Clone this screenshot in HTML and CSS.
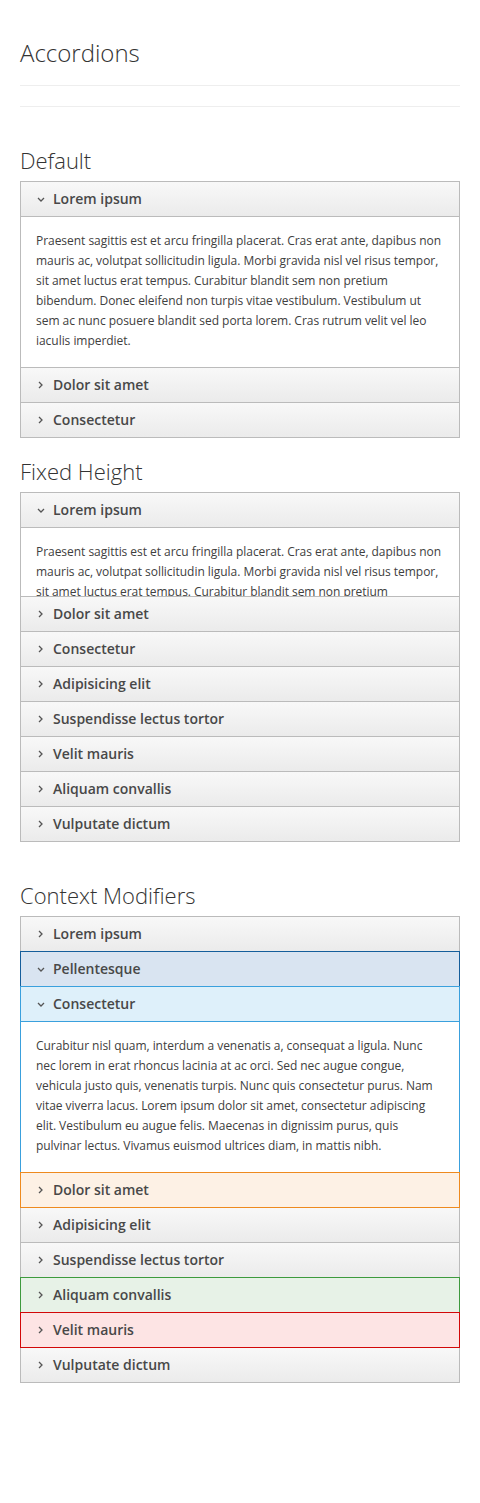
FILE: index.html
```html
<!DOCTYPE html>
<html lang="en">
<head>
<meta charset="utf-8">
<title>Accordions</title>
<link rel="stylesheet" href="styles.css">
</head>
<body>
<main class="page">
  <h1 class="page-title">Accordions</h1>
  <hr class="rule">
  <hr class="rule rule-second">

  <section class="section">
    <h2 class="section-title">Default</h2>
    <div class="accordion">
      <div class="acc-item is-open">
        <div class="acc-head"><svg class="chev chev-down" width="8" height="5" viewBox="0 0 8 5"><path d="M1 1 L4 4 L7 1" /></svg><span>Lorem ipsum</span></div>
        <div class="acc-body">Praesent sagittis est et arcu fringilla placerat. Cras erat ante, dapibus non mauris ac, volutpat sollicitudin ligula. Morbi gravida nisl vel risus tempor, sit amet luctus erat tempus. Curabitur blandit sem non pretium bibendum. Donec eleifend non turpis vitae vestibulum. Vestibulum ut sem ac nunc posuere blandit sed porta lorem. Cras rutrum velit vel leo iaculis imperdiet.</div>
      </div>
      <div class="acc-item">
        <div class="acc-head"><svg class="chev chev-right" width="5" height="8" viewBox="0 0 5 8"><path d="M1 1 L4 4 L1 7" /></svg><span>Dolor sit amet</span></div>
      </div>
      <div class="acc-item">
        <div class="acc-head"><svg class="chev chev-right" width="5" height="8" viewBox="0 0 5 8"><path d="M1 1 L4 4 L1 7" /></svg><span>Consectetur</span></div>
      </div>
    </div>
  </section>

  <section class="section">
    <h2 class="section-title">Fixed Height</h2>
    <div class="accordion accordion-fixed">
      <div class="acc-item is-open">
        <div class="acc-head"><svg class="chev chev-down" width="8" height="5" viewBox="0 0 8 5"><path d="M1 1 L4 4 L7 1" /></svg><span>Lorem ipsum</span></div>
        <div class="acc-body">Praesent sagittis est et arcu fringilla placerat. Cras erat ante, dapibus non mauris ac, volutpat sollicitudin ligula. Morbi gravida nisl vel risus tempor, sit amet luctus erat tempus. Curabitur blandit sem non pretium bibendum. Donec eleifend non turpis vitae vestibulum. Vestibulum ut sem ac nunc posuere blandit sed porta lorem. Cras rutrum velit vel leo iaculis imperdiet.</div>
      </div>
      <div class="acc-item"><div class="acc-head"><svg class="chev chev-right" width="5" height="8" viewBox="0 0 5 8"><path d="M1 1 L4 4 L1 7" /></svg><span>Dolor sit amet</span></div></div>
      <div class="acc-item"><div class="acc-head"><svg class="chev chev-right" width="5" height="8" viewBox="0 0 5 8"><path d="M1 1 L4 4 L1 7" /></svg><span>Consectetur</span></div></div>
      <div class="acc-item"><div class="acc-head"><svg class="chev chev-right" width="5" height="8" viewBox="0 0 5 8"><path d="M1 1 L4 4 L1 7" /></svg><span>Adipisicing elit</span></div></div>
      <div class="acc-item"><div class="acc-head"><svg class="chev chev-right" width="5" height="8" viewBox="0 0 5 8"><path d="M1 1 L4 4 L1 7" /></svg><span>Suspendisse lectus tortor</span></div></div>
      <div class="acc-item"><div class="acc-head"><svg class="chev chev-right" width="5" height="8" viewBox="0 0 5 8"><path d="M1 1 L4 4 L1 7" /></svg><span>Velit mauris</span></div></div>
      <div class="acc-item"><div class="acc-head"><svg class="chev chev-right" width="5" height="8" viewBox="0 0 5 8"><path d="M1 1 L4 4 L1 7" /></svg><span>Aliquam convallis</span></div></div>
      <div class="acc-item"><div class="acc-head"><svg class="chev chev-right" width="5" height="8" viewBox="0 0 5 8"><path d="M1 1 L4 4 L1 7" /></svg><span>Vulputate dictum</span></div></div>
    </div>
  </section>

  <section class="section section-spaced">
    <h2 class="section-title">Context Modifiers</h2>
    <div class="accordion">
      <div class="acc-item"><div class="acc-head"><svg class="chev chev-right" width="5" height="8" viewBox="0 0 5 8"><path d="M1 1 L4 4 L1 7" /></svg><span>Lorem ipsum</span></div></div>
      <div class="acc-item ctx-primary"><div class="acc-head"><svg class="chev chev-down" width="8" height="5" viewBox="0 0 8 5"><path d="M1 1 L4 4 L7 1" /></svg><span>Pellentesque</span></div></div>
      <div class="acc-item ctx-info is-open">
        <div class="acc-head"><svg class="chev chev-down" width="8" height="5" viewBox="0 0 8 5"><path d="M1 1 L4 4 L7 1" /></svg><span>Consectetur</span></div>
        <div class="acc-body">Curabitur nisl quam, interdum a venenatis a, consequat a ligula. Nunc nec lorem in erat rhoncus lacinia at ac orci. Sed nec augue congue, vehicula justo quis, venenatis turpis. Nunc quis consectetur purus. Nam vitae viverra lacus. Lorem ipsum dolor sit amet, consectetur adipiscing elit. Vestibulum eu augue felis. Maecenas in dignissim purus, quis pulvinar lectus. Vivamus euismod ultrices diam, in mattis nibh.</div>
      </div>
      <div class="acc-item ctx-warning"><div class="acc-head"><svg class="chev chev-right" width="5" height="8" viewBox="0 0 5 8"><path d="M1 1 L4 4 L1 7" /></svg><span>Dolor sit amet</span></div></div>
      <div class="acc-item"><div class="acc-head"><svg class="chev chev-right" width="5" height="8" viewBox="0 0 5 8"><path d="M1 1 L4 4 L1 7" /></svg><span>Adipisicing elit</span></div></div>
      <div class="acc-item"><div class="acc-head"><svg class="chev chev-right" width="5" height="8" viewBox="0 0 5 8"><path d="M1 1 L4 4 L1 7" /></svg><span>Suspendisse lectus tortor</span></div></div>
      <div class="acc-item ctx-success"><div class="acc-head"><svg class="chev chev-right" width="5" height="8" viewBox="0 0 5 8"><path d="M1 1 L4 4 L1 7" /></svg><span>Aliquam convallis</span></div></div>
      <div class="acc-item ctx-danger"><div class="acc-head"><svg class="chev chev-right" width="5" height="8" viewBox="0 0 5 8"><path d="M1 1 L4 4 L1 7" /></svg><span>Velit mauris</span></div></div>
      <div class="acc-item"><div class="acc-head"><svg class="chev chev-right" width="5" height="8" viewBox="0 0 5 8"><path d="M1 1 L4 4 L1 7" /></svg><span>Vulputate dictum</span></div></div>
    </div>
  </section>
</main>
</body>
</html>
```

FILE: styles.css
```css
html, body {
  margin: 0;
  padding: 0;
  background: #ffffff;
}

body {
  font-family: "Open Sans", "Liberation Sans", sans-serif;
  color: #333333;
}

.page {
  padding: 37px 20px 40px;
}

.page-title {
  margin: 0;
  font-size: 24px;
  font-weight: 300;
  line-height: 32px;
  color: #333333;
}

.rule {
  border: 0;
  border-top: 1px solid #eeeeee;
  margin: 16px 0 0;
  height: 0;
}

.rule-second {
  margin-top: 20px;
}

.section {
  margin-top: 38px;
}

.section + .section {
  margin-top: 18px;
}

.section.section-spaced {
  margin-top: 38px;
}

.section-title {
  margin: 0 0 6px;
  font-size: 22px;
  font-weight: 300;
  line-height: 30px;
  color: #333333;
}

.accordion {
  display: flex;
  flex-direction: column;
  padding-top: 1px;
}

.acc-item {
  position: relative;
  margin-top: -1px;
  border: 1px solid #bbbbbb;
  background: #ffffff;
}

.acc-head {
  display: flex;
  align-items: center;
  height: 34px;
  padding: 0 15px 0 16px;
  background: linear-gradient(to bottom, #f8f8f8, #ebebeb);
  font-size: 14px;
  font-weight: 600;
  color: #484848;
}

.acc-item.is-open > .acc-head {
  border-bottom: 1px solid #bbbbbb;
}

.chev {
  flex: none;
  fill: none;
  stroke: #555555;
  stroke-width: 1.3;
}

.chev-down {
  margin-right: 8px;
}

.chev-right {
  margin-left: 1px;
  margin-right: 10px;
}

.acc-head span {
  line-height: 20px;
}

.acc-body {
  padding: 14px 15px 16px;
  font-size: 12px;
  line-height: 20px;
  letter-spacing: -0.04px;
  color: #404040;
}

.accordion-fixed .acc-body {
  height: 68px;
  box-sizing: border-box;
  padding-bottom: 0;
  overflow: hidden;
}

/* context modifiers */
.ctx-primary,
.ctx-info,
.ctx-warning,
.ctx-success,
.ctx-danger {
  z-index: 1;
}

.ctx-primary { border-color: #155e9b; }
.ctx-primary > .acc-head { background: #d9e4f1; }

.ctx-info { border-color: #3aa0dd; }
.ctx-info > .acc-head { background: #def0fa; }
.ctx-info.is-open > .acc-head { border-bottom-color: #3aa0dd; }

.ctx-warning { border-color: #ee8a1e; }
.ctx-warning > .acc-head { background: #fdf1e5; }

.ctx-success { border-color: #3d9a3d; }
.ctx-success > .acc-head { background: #e7f2e7; }

.ctx-danger { border-color: #d20808; }
.ctx-danger > .acc-head { background: #fde4e4; }
```
